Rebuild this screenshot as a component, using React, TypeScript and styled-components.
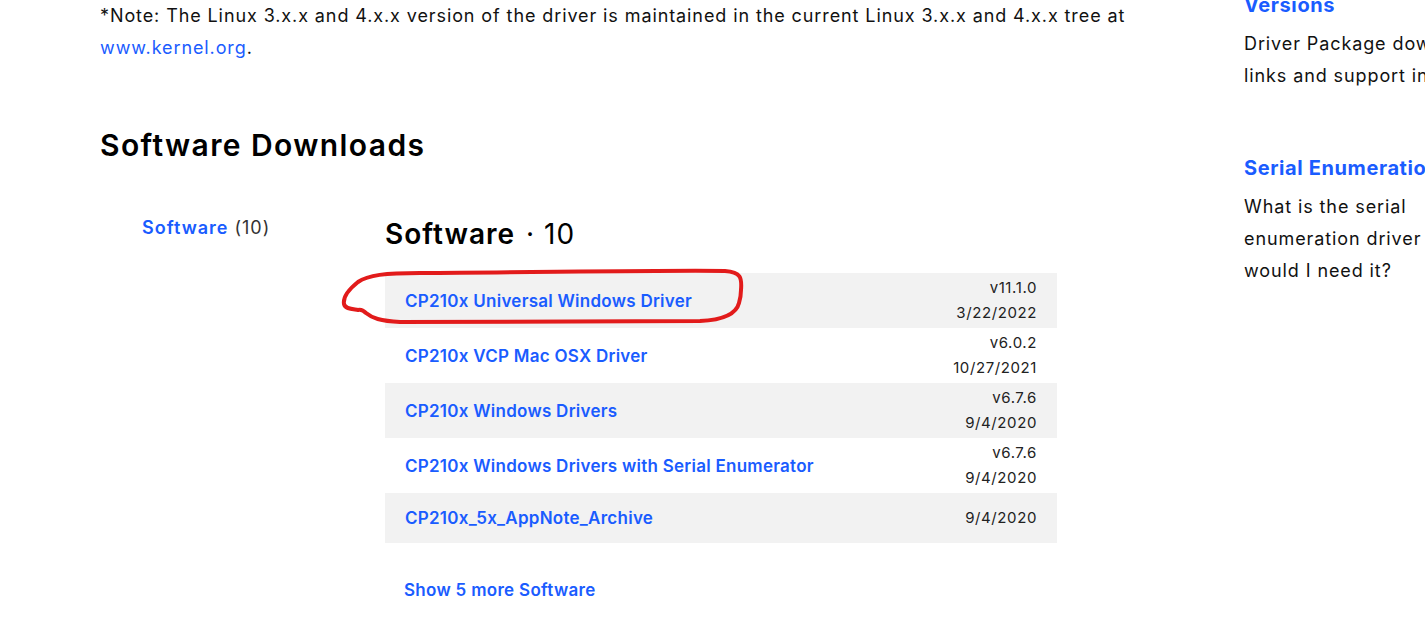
import React from "react";
import styled, { createGlobalStyle } from "styled-components";

const Global = createGlobalStyle`
  html, body { margin: 0; padding: 0; background: #fff; overflow: hidden; }
  body { font-family: "Inter", "Noto Sans", sans-serif; color: #000; }
  * { box-sizing: border-box; }
`;

const BLUE = "#1a5cff";

const Page = styled.div`
  display: flex;
  align-items: flex-start;
  width: 1425px;
  height: 638px;
  overflow: hidden;
`;

const Main = styled.main`
  flex: 0 0 1044px;
  margin-left: 100px;
`;

const Note = styled.p`
  margin: 0;
  font-size: 18px;
  line-height: 32px;
  letter-spacing: 0.9px;
  color: #111;
`;

const Link = styled.a`
  color: ${BLUE};
  text-decoration: none;
`;

const H2 = styled.h2`
  margin: 61px 0 0;
  font-size: 30px;
  line-height: 40px;
  font-weight: 600;
  letter-spacing: 1.4px;
  color: #000;
`;

const Section = styled.div`
  display: grid;
  grid-template-columns: 285px 672px;
  margin-top: 48px;
`;

const Nav = styled.nav`
  padding-left: 42px;
  font-size: 18px;
  line-height: 30px;
  letter-spacing: 1px;
`;

const NavLink = styled.a`
  color: ${BLUE};
  font-weight: 600;
  text-decoration: none;
`;

const Count = styled.span`
  color: #333;
  font-weight: 400;
  margin-left: 6px;
`;

const Title = styled.h3`
  margin: 0 0 18px;
  font-size: 28px;
  line-height: 42px;
  font-weight: 600;
  letter-spacing: 1px;
`;

const TitleCount = styled.span`
  font-weight: 400;
  margin-left: 11px;
`;

const Table = styled.div`
  position: relative;
  display: flex;
  flex-direction: column;
`;

const Row = styled.div<{ $shade: boolean }>`
  display: flex;
  align-items: center;
  justify-content: space-between;
  min-height: 50px;
  padding: 2.5px 20px;
  background: ${(p) => (p.$shade ? "#f2f2f2" : "#fff")};
`;

const RowLink = styled.a`
  color: ${BLUE};
  font-size: 17px;
  line-height: 24px;
  font-weight: 600;
  letter-spacing: 0.26px;
  text-decoration: none;
`;

const Meta = styled.div`
  display: flex;
  flex-direction: column;
  align-items: flex-end;
  font-size: 15px;
  line-height: 25px;
  letter-spacing: 0.6px;
  color: #222;
  transform: translateY(-1px);
`;

const Annotation = styled.svg`
  position: absolute;
  left: -50px;
  top: -8px;
  width: 415px;
  height: 65px;
  overflow: visible;
  pointer-events: none;
`;

const ShowMore = styled.a`
  display: block;
  margin: 35px 0 0 19px;
  color: ${BLUE};
  font-size: 17px;
  line-height: 24px;
  font-weight: 600;
  letter-spacing: 0.3px;
  text-decoration: none;
`;

const Side = styled.aside`
  flex: 0 0 320px;
  margin-left: 100px;
  margin-top: -9px;
`;

const SideItem = styled.div`
  & + & { margin-top: 62px; }
`;

const SideHead = styled.a`
  display: block;
  color: ${BLUE};
  font-size: 20px;
  line-height: 28px;
  font-weight: 700;
  letter-spacing: 0.6px;
  text-decoration: none;
  white-space: nowrap;
`;

const SideText = styled.p`
  margin: 9px 0 0;
  width: 272px;
  font-size: 18px;
  line-height: 32px;
  letter-spacing: 0.9px;
  color: #111;
`;

const rows = [
  { name: "CP210x Universal Windows Driver", version: "v11.1.0", date: "3/22/2022" },
  { name: "CP210x VCP Mac OSX Driver", version: "v6.0.2", date: "10/27/2021" },
  { name: "CP210x Windows Drivers", version: "v6.7.6", date: "9/4/2020" },
  { name: "CP210x Windows Drivers with Serial Enumerator", version: "v6.7.6", date: "9/4/2020" },
  { name: "CP210x_5x_AppNote_Archive", version: "", date: "9/4/2020" },
];

export default function App() {
  return (
    <>
      <Global />
      <Page>
        <Main>
          <Note>
            *Note: The Linux 3.x.x and 4.x.x version of the driver is maintained in the current Linux 3.x.x and 4.x.x tree at{" "}
            <Link href="#">www.kernel.org</Link>.
          </Note>
          <H2>Software Downloads</H2>
          <Section>
            <Nav>
              <NavLink href="#">Software</NavLink>
              <Count>(10)</Count>
            </Nav>
            <div>
              <Title>
                Software<TitleCount>· 10</TitleCount>
              </Title>
              <Table>
                {rows.map((r, i) => (
                  <Row key={r.name} $shade={i % 2 === 0}>
                    <RowLink href="#">{r.name}</RowLink>
                    <Meta>
                      {r.version && <span>{r.version}</span>}
                      <span>{r.date}</span>
                    </Meta>
                  </Row>
                ))}
                <Annotation viewBox="335 265 415 65">
                  <path
                    d="M 741 290 C 742 278, 741 272, 725 271 C 680 270, 560 272, 420 273 C 385 273, 368 275, 358 282 C 348 290, 343 298, 344 304 C 345 309, 352 309, 358 310 C 362 309, 364 311, 366 313 C 372 318, 380 321, 400 322 L 700 321 C 722 320, 736 315, 739 303 C 741 296, 741 292, 741 290 Z"
                    fill="none"
                    stroke="#e21b1b"
                    strokeWidth="4"
                    strokeLinejoin="round"
                    strokeLinecap="round"
                  />
                </Annotation>
              </Table>
              <ShowMore href="#">Show 5 more Software</ShowMore>
            </div>
          </Section>
        </Main>
        <Side>
          <SideItem>
            <SideHead href="#">Versions</SideHead>
            <SideText>Driver Package downloads, links and support info</SideText>
          </SideItem>
          <SideItem>
            <SideHead href="#">Serial Enumeration Driver</SideHead>
            <SideText>What is the serial enumeration driver and why would I need it?</SideText>
          </SideItem>
        </Side>
      </Page>
    </>
  );
}
